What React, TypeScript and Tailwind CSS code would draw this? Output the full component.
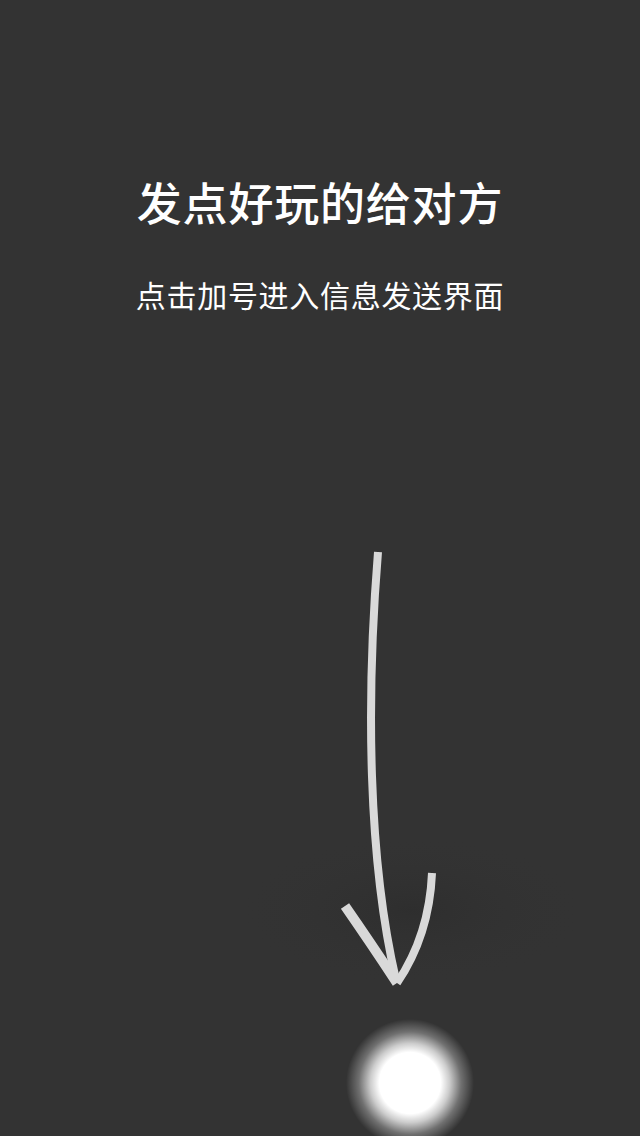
export default function App() {
    return (
        <section className="w-full h-[1136px] bg-[#333333] flex flex-col items-center overflow-hidden" style={{ fontFamily: '"Noto Sans CJK SC", "Noto Sans", sans-serif' }}>
            <h1 className="mt-[175px] text-[45px] leading-[54px] font-medium tracking-[0.8px] text-white">发点好玩的给对方</h1>
            <p className="mt-[47px] text-[30px] leading-[36px] tracking-[0.7px] text-white">点击加号进入信息发送界面</p>
            {/* arrow + glow */}
            <svg className="mt-[218px] shrink-0" width="640" height="606" viewBox="0 530 640 606">
                <defs>
                    <radialGradient id="glow" cx="0.5" cy="0.5" r="0.5">
                        <stop offset="0" stopColor="#ffffff" />
                        <stop offset="0.48" stopColor="#ffffff" />
                        <stop offset="0.62" stopColor="#ffffff" stopOpacity="0.75" />
                        <stop offset="0.8" stopColor="#ffffff" stopOpacity="0.3" />
                        <stop offset="1" stopColor="#ffffff" stopOpacity="0" />
                    </radialGradient>
                    <radialGradient id="shade" cx="0.5" cy="0.5" r="0.5">
                        <stop offset="0" stopColor="#2c2c2c" stopOpacity="0.7" />
                        <stop offset="1" stopColor="#333333" stopOpacity="0" />
                    </radialGradient>
                </defs>
                <ellipse cx="412" cy="910" rx="175" ry="75" fill="url(#shade)" />
                <g fill="none" stroke="#d9d9d9" strokeWidth="8" strokeLinecap="butt">
                    <path d="M378 552 C 366 700, 368 860, 396 980" />
                    <path d="M345 906 Q 370 942 397 983" strokeWidth="10" />
                    <path d="M432 873 C 430 920, 416 955, 397 983" />
                </g>
                <circle cx="410" cy="1083" r="64" fill="url(#glow)" />
            </svg>
        </section>
    );
}
